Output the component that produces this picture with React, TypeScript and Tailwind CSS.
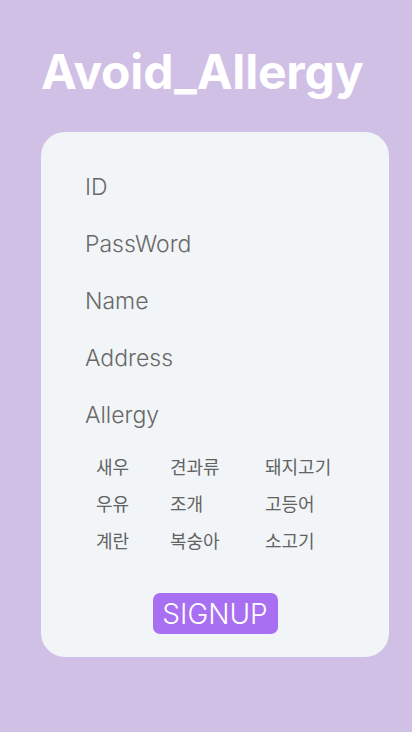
export default function App() {
  const allergies = [
    ["새우", "견과류", "돼지고기"],
    ["우유", "조개", "고등어"],
    ["계란", "복숭아", "소고기"],
  ];
  return (
    <div className="w-[412px] h-[732px] bg-[#d0c0e6] flex flex-col" style={{ fontFamily: "Inter, 'Noto Sans CJK KR', sans-serif" }}>
      <h1 className="ml-[41px] mt-[42px] text-[48px] leading-[60px] font-bold text-white tracking-[-0.2px]">Avoid_Allergy</h1>
      <div className="ml-[41px] mt-[30px] w-[348px] h-[525px] bg-[#f2f5f7] rounded-[24px] flex flex-col pt-[27px]">
        {["ID", "PassWord", "Name", "Address", "Allergy"].map((l) => (
          <div key={l} className="h-[57px] flex items-center pl-[44px] text-[23px] text-[#686868] font-light">{l}</div>
        ))}
        <div className="mt-[4px] pl-[55px] flex flex-col" style={{ fontFamily: "'Noto Sans CJK KR', sans-serif" }}>
          {allergies.map((row, i) => (
            <div key={i} className="h-[37px] flex items-center text-[18px] text-[#636363]">
              <span className="w-[74px]">{row[0]}</span>
              <span className="w-[95px]">{row[1]}</span>
              <span>{row[2]}</span>
            </div>
          ))}
        </div>
        <div className="mt-[34px] flex justify-center">
          <button className="w-[125px] h-[41px] bg-[#a96ff2] rounded-[7px] text-white text-[28px] font-light leading-none flex items-center justify-center">SIGNUP</button>
        </div>
      </div>
    </div>
  );
}
